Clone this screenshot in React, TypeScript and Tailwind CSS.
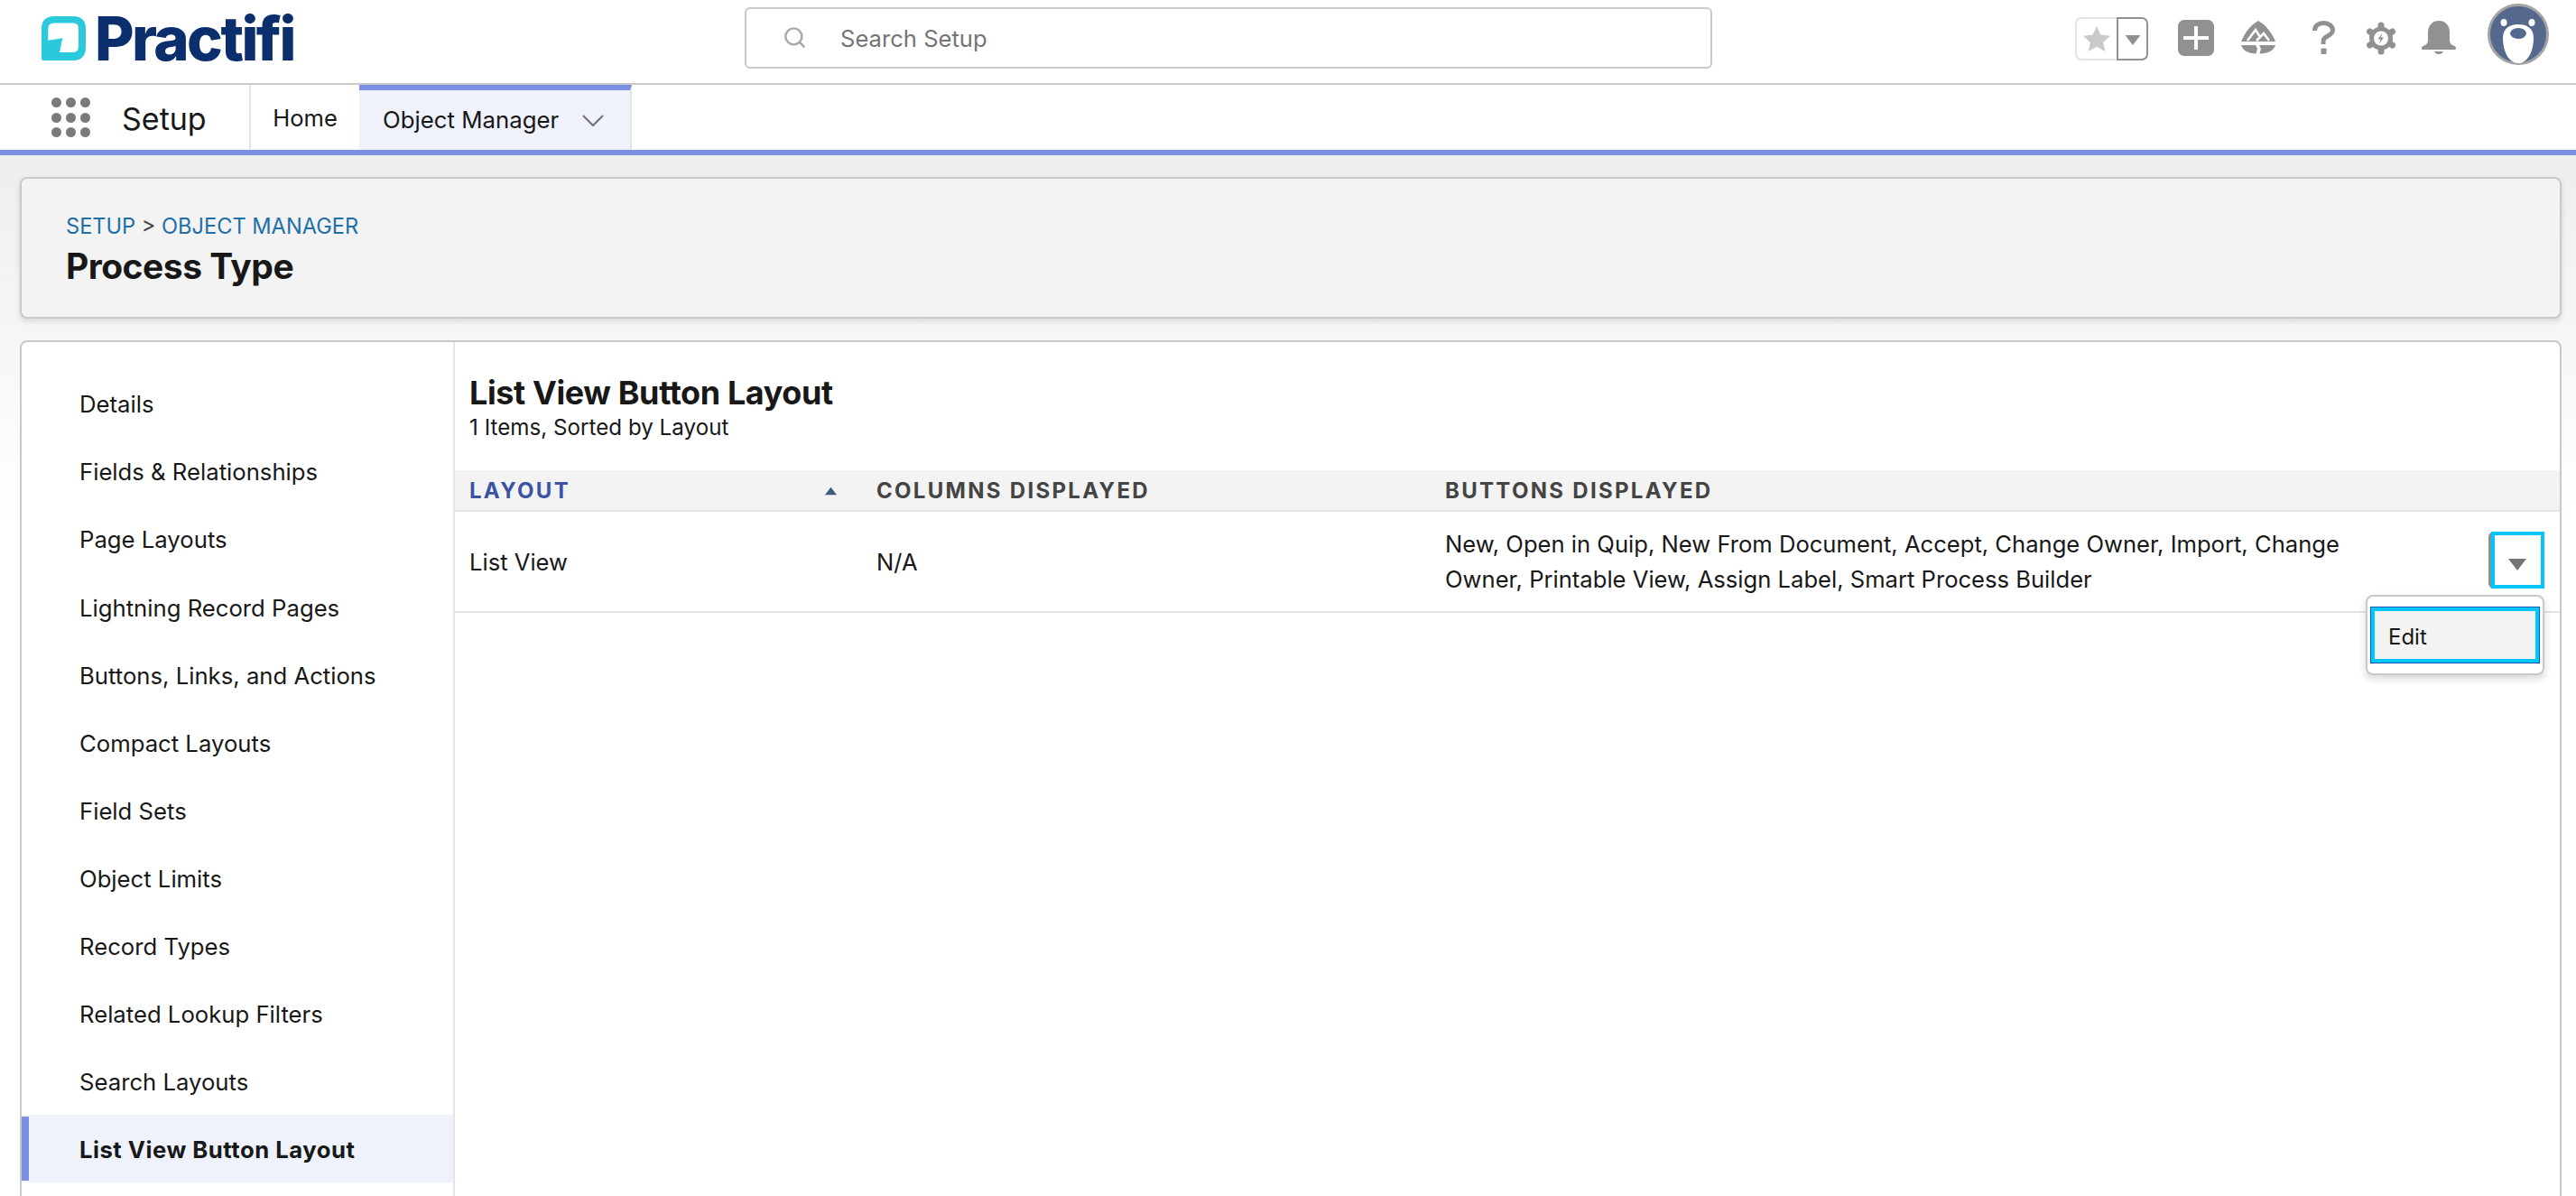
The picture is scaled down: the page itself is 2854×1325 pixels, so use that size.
import { Search } from "lucide-react";

const sideItems = [
  "Details",
  "Fields & Relationships",
  "Page Layouts",
  "Lightning Record Pages",
  "Buttons, Links, and Actions",
  "Compact Layouts",
  "Field Sets",
  "Object Limits",
  "Record Types",
  "Related Lookup Filters",
  "Search Layouts",
];

function Caret({ className }: { className?: string }) {
  return (
    <svg viewBox="0 0 20 13" className={className} fill="currentColor">
      <path d="M0 0h20L10 13z" />
    </svg>
  );
}

function Logo() {
  return (
    <div className="flex items-center ml-[46px] w-[290px] mt-[-7px]">
      <svg viewBox="0 0 49 49" className="w-[49px] h-[49px] shrink-0">
        <path
          fillRule="evenodd"
          fill="#2bc9dc"
          d="M14 0H35Q49 0 49 14V34Q49 49 35 49H2Q0 49 0 47V14Q0 0 14 0ZM7.3 26.7V14Q7.3 7.6 14 7.6H35Q41 7.6 41 14V33Q41 40 35 40H20L23.3 24.3Z"
        />
      </svg>
      <span className="ml-[10px] text-[67px] leading-none font-extrabold tracking-[-2.6px] text-[#0b2f6c] font-['Inter',sans-serif]">
        Practifi
      </span>
    </div>
  );
}

function TopIcons() {
  return (
    <div className="ml-auto flex items-center text-[#919191]">
      <div className="flex h-[48px] mt-[-6px]">
        <div className="w-[46px] flex items-center justify-center border-2 border-r-0 border-[#e5e5e5] rounded-l-[7px]">
          <svg viewBox="0 0 30 28" className="w-[30px] h-[28px]" fill="#c9c9c9">
            <path d="M15 0l4.4 9.6 10.6 1.2-7.9 7.1 2.2 10.1L15 22.8 5.7 28l2.2-10.1L0 10.8l10.6-1.2z" />
          </svg>
        </div>
        <div className="w-[35px] flex items-center justify-center border-2 border-[#919191] rounded-r-[7px]">
          <Caret className="w-[18px] h-[11px] mt-[3px]" />
        </div>
      </div>
      <svg viewBox="0 0 40 40" className="w-[40px] h-[40px] ml-[33px] mt-[-8px]">
        <rect width="40" height="40" rx="7" fill="#919191" />
        <path d="M20 7v26M6 20h28" stroke="#fff" strokeWidth="4" />
      </svg>
      <svg viewBox="0 0 38 37" className="w-[38px] h-[37px] ml-[30px] mt-[-9px]">
        <path d="M19 0C26 4 33 11 38 23H0C5 11 12 4 19 0Z" fill="#919191" />
        <path d="M0 27H16L18 31 16.5 36.5C8 36.5 2 33 0 27ZM38 27H20L22 31 20.5 36.5C30 36.5 36 33 38 27Z" fill="#919191" />
        <path d="M7 22L16 10 21 18M17 22L25 14 31 22" fill="none" stroke="#fff" strokeWidth="2.6" />
      </svg>
      <svg viewBox="0 0 25 37" className="w-[25px] h-[37px] ml-[41px] mt-[-9px]" fill="none">
        <path d="M2.5 11C2.5 5 7 2.5 12.5 2.5S22.5 6 22.5 10.5C22.5 16 15 16.5 12.5 20.5 12 22 12 24 12 26" stroke="#919191" strokeWidth="5" />
        <rect x="9.5" y="30.5" width="6" height="6.5" rx="1" fill="#919191" />
      </svg>
      <svg viewBox="0 0 34 37" className="w-[34px] h-[37px] ml-[34px] mt-[-8px]">
        <g stroke="#919191" strokeWidth="7" strokeLinecap="round">
          <path d="M17 4v29M4.5 11l25 15M29.5 11l-25 15" />
        </g>
        <circle cx="17" cy="18.5" r="13" fill="#919191" />
        <circle cx="17" cy="18.5" r="8" fill="#fff" />
        <path d="M18.5 12.5l-5 7h3l-1.5 5 5-7h-3z" fill="#919191" />
      </svg>
      <svg viewBox="0 0 38 38" className="w-[38px] h-[38px] ml-[28px] mt-[-8px]" fill="#919191">
        <path d="M19 0C27 0 31 6 31 13V21C31 25 33 27 36.5 28 38.5 29 38.5 32 36.5 32H1.5C-.5 32 -.5 29 1.5 28 5 27 7 25 7 21V13C7 6 11 0 19 0Z" />
        <path d="M14 34H24C23 38 15 38 14 34Z" />
      </svg>
      <svg viewBox="0 0 68 68" className="w-[68px] h-[68px] ml-[35px] mr-[30px] mt-[-16px]">
        <circle cx="34" cy="34" r="32.5" fill="#54698d" stroke="#a3a3a3" strokeWidth="3" />
        <ellipse cx="18" cy="21" rx="3.5" ry="4" fill="#fff" />
        <ellipse cx="49" cy="21" rx="3.5" ry="4" fill="#fff" />
        <path d="M34 23C44 23 51 28 51 38 51 52 45 66 34 66 23 66 17 52 17 38 17 28 24 23 34 23Z" fill="#fff" />
        <ellipse cx="34" cy="33" rx="9" ry="6" fill="#54698d" />
      </svg>
    </div>
  );
}

export default function App() {
  return (
    <div className="w-[2854px] h-[1325px] overflow-hidden bg-white text-[#181818] text-[25.6px] font-['Inter',sans-serif]">
      <header className="h-[94px] flex items-center border-b-2 border-[#c9c9c9]">
        <Logo />
        <div className="ml-[489px] mt-[-9px] w-[1072px] h-[68px] flex items-center border-2 border-[#c9c9c9] rounded-[6px] pl-[40px]">
          <Search size={27} strokeWidth={2.2} className="text-[#a8a8a8]" />
          <span className="ml-[37px] mt-[3px] text-[#747474]">Search Setup</span>
        </div>
        <TopIcons />
      </header>

      <nav className="h-[78px] flex border-b-[6px] border-[#7b8fe3]">
        <div className="w-[278px] flex items-center border-r-2 border-[#e5e5e5] pl-[57px]">
          <div className="grid grid-cols-3 gap-x-[5px] gap-y-[5.5px] w-[43px]">
            {Array.from({ length: 9 }).map((_, i) => (
              <span key={i} className="w-[11px] h-[11px] rounded-full bg-[#7a7a7a]" />
            ))}
          </div>
          <span className="ml-[35px] pt-[3px] text-[34px]">Setup</span>
        </div>
        <div className="w-[120px] flex items-center justify-center pt-[3px]">Home</div>
        <div className="w-[302px] flex items-center bg-[#eff2fb] border-t-[6px] border-r-2 border-t-[#7b8fe3] border-r-[#e5e5e5] pl-[26px]">
          <span className="text-[25.8px]">Object Manager</span>
          <svg viewBox="0 0 24 13" className="w-[24px] h-[13px] ml-[26px]" fill="none">
            <path d="M1 1l11 11L23 1" stroke="#747474" strokeWidth="2.2" />
          </svg>
        </div>
      </nav>

      <main className="h-[1153px] bg-linear-to-b from-[#eeeeee] to-white to-[35%] pl-[22px] pr-[16px] pt-[24px]">
        <section className="h-[157px] flex flex-col bg-[#f3f3f3] border-2 border-[#c9c9c9] rounded-[8px] shadow-[0_3px_6px_rgba(0,0,0,0.12)] pl-[49px] pt-[36px]">
          <div className="text-[23.6px] text-[#1f6fa8] leading-[34px]">
            SETUP <span className="text-[#444444]">&gt;</span> OBJECT MANAGER
          </div>
          <h1 className="text-[39px] font-bold leading-[50px] mt-[2px] tracking-[-0.5px]">Process Type</h1>
        </section>

        <section className="mt-[24px] h-[960px] flex bg-white border-2 border-[#c9c9c9] rounded-[8px]">
          <aside className="w-[480px] shrink-0 border-r-2 border-[#e5e5e5] pt-[30px] text-[25.7px]">
            {sideItems.map((item) => (
              <div key={item} className="h-[75.1px] flex items-center pl-[64px] pt-[4px]">
                {item}
              </div>
            ))}
            <div className="h-[75.2px] flex bg-[#eff2fb] font-bold tracking-[0.5px]">
              <span className="w-[8px] my-[2px] bg-[#7b8fe3]" />
              <span className="pl-[56px] pt-[4px] self-center">List View Button Layout</span>
            </div>
          </aside>

          <div className="flex-1 min-w-0">
            <div className="h-[142px] pl-[16px] pt-[32px]">
              <h2 className="text-[36px] font-bold leading-[48px] tracking-[-0.4px]">List View Button Layout</h2>
              <p className="text-[24.2px] leading-[32px] mt-[-1px]">1 Items, Sorted by Layout</p>
            </div>

            <div className="h-[46px] flex items-center bg-[#f3f3f3] border-b-2 border-[#e5e5e5] pt-[1px] text-[24px] font-bold tracking-[2.3px] text-[#444444]">
              <div className="w-[467px] pl-[16px] pr-[44px] flex items-center justify-between text-[#3a53a4]">
                LAYOUT
                <Caret className="w-[13px] h-[10px] rotate-180 text-[#3e5a7e]" />
              </div>
              <div className="w-[630px]">COLUMNS DISPLAYED</div>
              <div>BUTTONS DISPLAYED</div>
            </div>

            <div className="relative h-[112px] flex items-center border-b-2 border-[#e5e5e5]">
              <div className="w-[467px] pl-[16px] pt-[3px]">List View</div>
              <div className="w-[630px] pt-[3px]">N/A</div>
              <div className="w-[1010px] leading-[39px]">
                New, Open in Quip, New From Document, Accept, Change Owner, Import, Change Owner, Printable View, Assign
                Label, Smart Process Builder
              </div>
              <div className="ml-auto mr-[17px] mt-[-3px] flex w-[62px] h-[63px] rounded-[6px] border-l-[3px] border-[#8f8f8f]">
                <div className="flex-1 flex items-center justify-center pt-[9px] pr-[2px] border-4 border-[#00c5ff] text-[#747474]">
                  <Caret className="w-[20px] h-[13px]" />
                </div>
              </div>
              <div className="absolute right-[17px] top-[92px] w-[198px] h-[89px] bg-white border-2 border-[#c9c9c9] rounded-[8px] shadow-[0_4px_8px_rgba(0,0,0,0.16)] pt-[11px] px-[3px]">
                <div className="h-[63px] flex items-center bg-[#f3f3f3] border-[5px] border-[#00c5ff] outline-[1.5px] outline-[#0b5cab] -outline-offset-[1.5px] pl-[15px] pt-[4px] text-[24px]">
                  Edit
                </div>
              </div>
            </div>
          </div>
        </section>
      </main>
    </div>
  );
}
